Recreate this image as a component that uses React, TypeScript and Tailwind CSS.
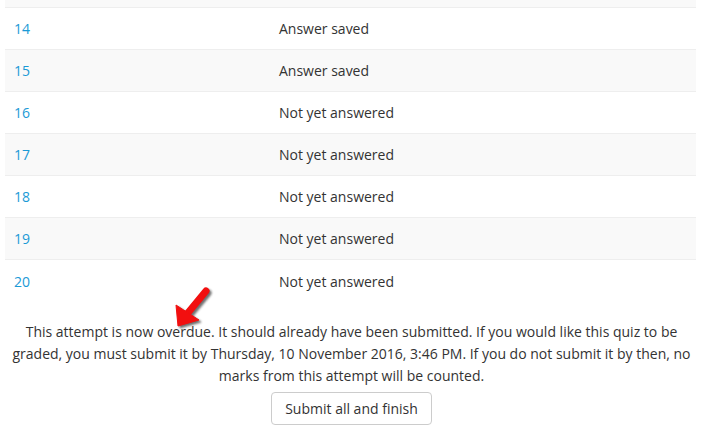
const rows = [
  { num: 14, status: 'Answer saved' },
  { num: 15, status: 'Answer saved' },
  { num: 16, status: 'Not yet answered' },
  { num: 17, status: 'Not yet answered' },
  { num: 18, status: 'Not yet answered' },
  { num: 19, status: 'Not yet answered' },
  { num: 20, status: 'Not yet answered' },
];

const Arrow = () => (
  <svg
    width="48"
    height="50"
    viewBox="0 0 48 50"
    className="absolute left-[170px] top-[284px] pointer-events-none"
  >
    <defs>
      <filter id="sh" x="-30%" y="-30%" width="160%" height="160%">
        <feGaussianBlur stdDeviation="1.2" />
      </filter>
    </defs>
    <g transform="translate(2 2)" fill="#333" stroke="#333" opacity="0.7" filter="url(#sh)">
      <line x1="17" y1="30" x2="36" y2="7" strokeWidth="7" strokeLinecap="round" />
      <polygon points="8,42 6,21 29,36" strokeWidth="1" strokeLinejoin="round" />
    </g>
    <g fill="#f20f0f" stroke="#f20f0f">
      <line x1="17" y1="30" x2="36" y2="7" strokeWidth="7" strokeLinecap="round" />
      <polygon points="8,42 6,21 29,36" strokeWidth="1" strokeLinejoin="round" />
    </g>
  </svg>
);

export default function App() {
  return (
    <div
      className="relative w-[703px] h-[435px] overflow-hidden bg-white text-[14px] text-[#333]"
      style={{ fontFamily: '"Open Sans", "Noto Sans", sans-serif' }}
    >
      <div className="ml-[5px] mr-[7px]">
        <div className="h-[8px] bg-[#f9f9f9] border-b border-[#eee]" />
        {rows.map((r, i) => (
          <div
            key={r.num}
            className={`flex items-center h-[42px] ${i < rows.length - 1 ? 'border-b border-[#eee]' : ''} ${i % 2 === 1 ? 'bg-[#f9f9f9]' : 'bg-white'}`}
          >
            <div className="w-[266px] pl-[9px]">
              <a className="text-[#1b9ad6]">{r.num}</a>
            </div>
            <div className="pl-[8px]">{r.status}</div>
          </div>
        ))}
      </div>

      <div className="mt-[19px] px-[5px] text-center leading-[22px]">
        This attempt is now overdue. It should already have been submitted. If you would like this quiz to be
        graded, you must submit it by Thursday, 10 November 2016, 3:46 PM. If you do not submit it by then, no
        marks from this attempt will be counted.
      </div>

      <div className="mt-[5px] flex justify-center">
        <button className="h-[33px] px-[13px] bg-white border border-[#ccc] rounded-[4px] text-[#333]">
          Submit all and finish
        </button>
      </div>

      <Arrow />
    </div>
  );
}
